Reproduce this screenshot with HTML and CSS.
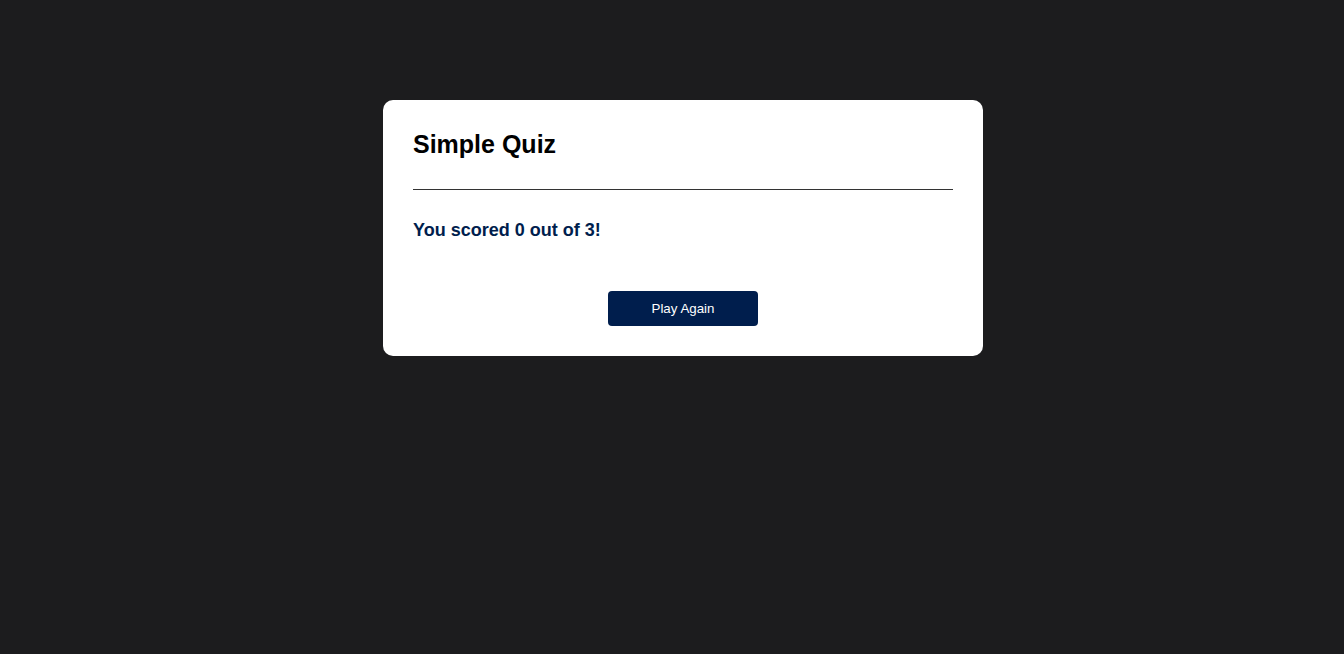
FILE: index.html
```html
<!DOCTYPE html>
<html>
<head>
<meta charset="utf-8">
<link rel="stylesheet" href="styles.css">
</head>
<body>
<div class="page">
  <div class="app">
    <h1 class="title">Simple Quiz</h1>
    <div class="quiz">
      <h2 class="question">You scored 0 out of 3!</h2>
      <div class="answers"></div>
      <button class="next-btn">Play Again</button>
    </div>
  </div>
</div>
</body>
</html>
```
FILE: styles.css
```css
* {
  margin: 0;
  padding: 0;
  box-sizing: border-box;
}
html, body {
  background: #1c1c1e;
  font-family: "Liberation Sans", Arial, sans-serif;
}
.page {
  padding: 100px 0 0 22px;
}
.app {
  background: #fff;
  width: 600px;
  margin: 0 auto;
  border-radius: 10px;
  padding: 30px;
}
.title {
  font-size: 25px;
  color: #000;
  font-weight: 700;
  border-bottom: 1px solid #333;
  padding-bottom: 30px;
}
.quiz {
  padding-top: 30px;
}
.question {
  font-size: 18px;
  color: #001e4d;
  font-weight: 700;
}
.next-btn {
  display: block;
  background: #001e4d;
  color: #fff;
  font-family: "Liberation Sans", Arial, sans-serif;
  font-size: 13.333px;
  font-weight: 500;
  width: 150px;
  border: 0;
  padding: 10px;
  margin: 50px auto 0;
  border-radius: 4px;
  cursor: pointer;
}
```
